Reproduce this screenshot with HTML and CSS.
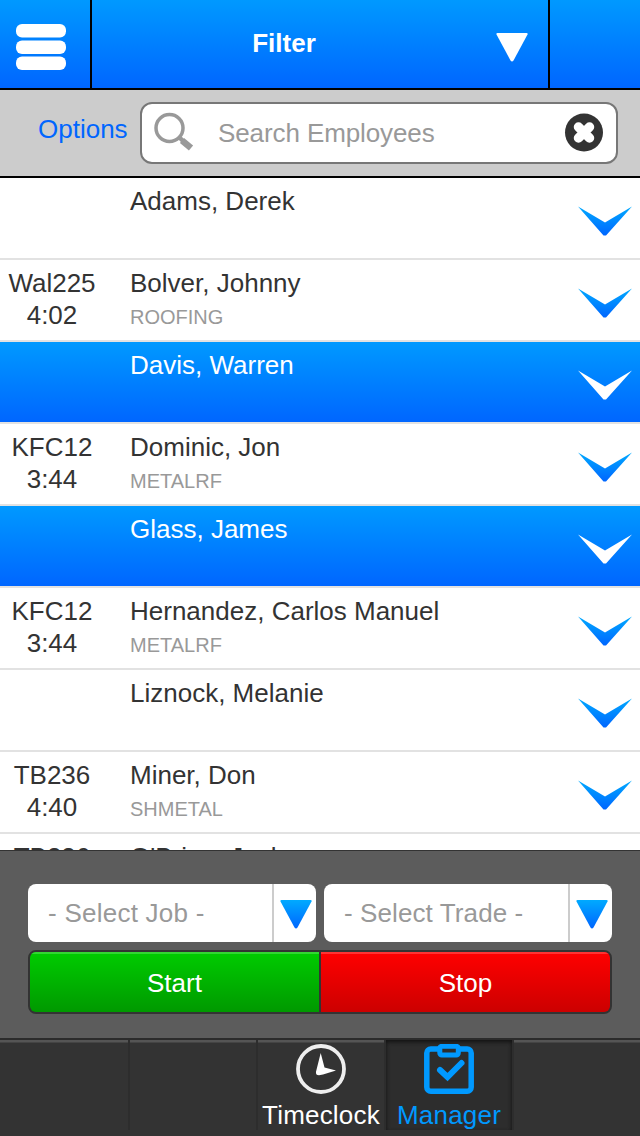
FILE: index.html
```
<!DOCTYPE html>
<html lang="en">
<head>
<meta charset="utf-8">
<title>Manager</title>
<link rel="stylesheet" href="styles.css">
</head>
<body>
<svg class="defs" width="0" height="0">
  <defs>
    <linearGradient id="blue" x1="0" y1="0" x2="0" y2="1"><stop offset="0" stop-color="#0af"/><stop offset="1" stop-color="#06f"/></linearGradient>
    <symbol id="chevron" viewBox="0 0 54 30"><path d="M0 .5 27 16.500 54 .5 28 29.500h-2.500z"/></symbol>
    <symbol id="triangle" viewBox="0 0 32 30"><path d="M1.500 1h29q1.500 0 1 1.500L17.500 28.500q-1.500 2-3 0L.5 2.500Q0 1 1.500 1z"/></symbol>
  </defs>
</svg>
<div class="app">
  <header class="topbar">
    <div class="menu">
      <svg width="50" height="48" viewBox="0 0 50 48" fill="#fff"><rect y="1" width="50" height="13.500" rx="6"/><rect y="17.500" width="50" height="13.500" rx="6"/><rect y="33.500" width="50" height="13.500" rx="6"/></svg>
    </div>
    <div class="filter">
      <span class="filter-title">Filter</span>
      <svg class="filter-arrow" width="32" height="30" fill="#fff"><use href="#triangle"/></svg>
    </div>
    <div class="extra"></div>
  </header>
  <div class="search-row">
    <span class="options">Options</span>
    <div class="search">
      <svg width="40" height="40" viewBox="0 0 40 40" fill="none" stroke="#999"><circle cx="15.500" cy="16" r="13.500" stroke-width="3.500"/><path d="M25 25l4 4" stroke-width="4.500"/><path d="M28 28.500 37 36" stroke-width="6.500"/></svg>
      <span class="placeholder">Search Employees</span>
      <svg class="clear" width="40" height="40" viewBox="0 0 40 40"><circle cx="20" cy="20.500" r="19" fill="#333"/><path d="M14.500 15l11 11m0-11l-11 11" stroke="#fff" stroke-width="9.500" stroke-linecap="round"/></svg>
    </div>
  </div>
  <main class="list">
    <div class="row"><div class="job"></div><div class="who"><div>Adams, Derek</div></div><svg class="chev"><use href="#chevron"/></svg></div>
    <div class="row"><div class="job">Wal225<br>4:02</div><div class="who"><div>Bolver, Johnny</div><div class="trade">ROOFING</div></div><svg class="chev"><use href="#chevron"/></svg></div>
    <div class="row selected"><div class="job"></div><div class="who"><div>Davis, Warren</div></div><svg class="chev"><use href="#chevron"/></svg></div>
    <div class="row"><div class="job">KFC12<br>3:44</div><div class="who"><div>Dominic, Jon</div><div class="trade">METALRF</div></div><svg class="chev"><use href="#chevron"/></svg></div>
    <div class="row selected"><div class="job"></div><div class="who"><div>Glass, James</div></div><svg class="chev"><use href="#chevron"/></svg></div>
    <div class="row"><div class="job">KFC12<br>3:44</div><div class="who"><div>Hernandez, Carlos Manuel</div><div class="trade">METALRF</div></div><svg class="chev"><use href="#chevron"/></svg></div>
    <div class="row"><div class="job"></div><div class="who"><div>Liznock, Melanie</div></div><svg class="chev"><use href="#chevron"/></svg></div>
    <div class="row"><div class="job">TB236<br>4:40</div><div class="who"><div>Miner, Don</div><div class="trade">SHMETAL</div></div><svg class="chev"><use href="#chevron"/></svg></div>
    <div class="row"><div class="job">TB236</div><div class="who"><div>O'Brien, Jack</div></div><svg class="chev"><use href="#chevron"/></svg></div>
  </main>
  <section class="controls">
    <div class="selects">
      <div class="select"><span class="select-label">- Select Job -</span><span class="select-arrow"><svg width="32" height="30" fill="url(#blue)"><use href="#triangle"/></svg></span></div>
      <div class="select"><span class="select-label">- Select Trade -</span><span class="select-arrow"><svg width="32" height="30" fill="url(#blue)"><use href="#triangle"/></svg></span></div>
    </div>
    <div class="buttons"><div class="button start">Start</div><div class="button stop">Stop</div></div>
  </section>
  <nav class="tabs">
    <div class="tab first"></div>
    <div class="tab"></div>
    <div class="tab">
      <svg width="50" height="50" viewBox="0 0 50 50"><circle cx="25" cy="25" r="23" fill="none" stroke="#eee" stroke-width="3.800"/><path d="M24.700 9 28.500 23.500 40 26.500 27 30.500 23 31.300q-3.500 0-3-3.500z" fill="#fff"/></svg>
      <span class="tab-label">Timeclock</span>
    </div>
    <div class="tab active">
      <svg width="50" height="50" viewBox="0 0 50 50" fill="none" stroke="#09f"><rect x="2.800" y="5" width="44.400" height="42.200" rx="4" stroke-width="5.500"/><rect x="15.800" y="2.300" width="18.500" height="8.700" rx="2" fill="#2d2d2d" stroke-width="5"/><path d="M16 26 23.500 33 37.500 19" stroke-width="6" stroke-linecap="round"/></svg>
      <span class="tab-label">Manager</span>
    </div>
    <div class="tab last"></div>
  </nav>
</div>
</body>
</html>
```
FILE: styles.css
```
* { box-sizing: border-box; }
body { margin: 0; font-family: "Liberation Sans", Arial, sans-serif; font-size: 26px; color: #333; }
svg { display: block; flex: none; }
.defs { position: absolute; }
.app { width: 640px; height: 1136px; display: flex; flex-direction: column; overflow: hidden; background: #fff; }
.topbar { flex: none; height: 90px; display: flex; border-bottom: 2px solid #000; background: linear-gradient(#09f, #06f); }
.menu { width: 92px; padding: 23px 0 0 16px; border-right: 2px solid #000; }
.filter { width: 458px; display: flex; align-items: flex-start; border-right: 2px solid #000; color: #fff; font-weight: bold; }
.filter-title { width: 404px; padding: 28px 20px 0 0; line-height: 30px; text-align: center; }
.filter-arrow { margin-top: 32px; }
.search-row { flex: none; height: 88px; display: flex; padding: 12px 22px 0 38px; border-bottom: 2px solid #000; background: #ccc; }
.options { width: 102px; padding-top: 12px; line-height: 30px; color: #06f; white-space: nowrap; }
.search { width: 478px; height: 62px; display: flex; align-items: center; padding: 0 12px; border: 2px solid #777; border-radius: 12px; background: #fff; color: #999; }
.search svg { position: relative; top: -1px; }
.placeholder { flex: 1; padding-left: 24px; line-height: 30px; letter-spacing: -0.1px; }
.list { height: 672px; flex: none; overflow: hidden; }
.row { height: 82px; display: flex; border-bottom: 2px solid #e2e2e2; line-height: 32px; }
.row.selected { background: linear-gradient(#09f, #06f); color: #fff; }
.job { width: 104px; padding-top: 7px; text-align: center; }
.who { flex: 1; padding: 7px 0 0 26px; }
.trade { padding-top: 2px; font-size: 20px; color: #999; }
.chev { width: 54px; height: 30px; margin: 28px 8px 0 0; fill: url(#blue); }
.selected .chev { fill: #fff; }
.controls { flex: none; height: 188px; padding: 33px 28px 0; border-top: 1px solid #333; background: #5c5c5c; }
.selects { display: flex; gap: 8px; }
.select { width: 288px; height: 58px; display: flex; border-radius: 8px; background: #fff; color: #999; }
.select-label { width: 244px; padding: 14px 0 0 20px; line-height: 30px; letter-spacing: 0.25px; }
.select + .select .select-label { letter-spacing: 0.1px; }
.select-arrow { width: 44px; padding: 15px 0 0 6px; border-left: 2px solid #ccc; }
.buttons { height: 64px; display: flex; margin-top: 8px; border: 2px solid #333; border-radius: 8px; overflow: hidden; background: #333; }
.button { flex: 1; line-height: 62px; text-align: center; color: #fff; }
.start { border-right: 2px solid #333; background: linear-gradient(#0c0, #090); box-shadow: inset 0 2px #33d633; }
.stop { background: linear-gradient(#f00, #c00); box-shadow: inset 0 2px #f33; }
.tabs { flex: 1; display: flex; padding-bottom: 8px; border-top: 2px solid #2b2b2b; background: #333; }
.tab { width: 128px; flex: none; padding-top: 4px; display: flex; flex-direction: column; align-items: center; border-right: 2px solid #2d2d2d; box-shadow: inset 0 2px #555, inset 0 3px #444; color: #fff; }
.tab.first { width: 130px; }
.tab.last { width: 126px; border-right: 0; }
.tab-label { line-height: 30px; padding-top: 6px; letter-spacing: 0.2px; }
.tab.active { background: #2d2d2d; box-shadow: inset 0 2px 4px #111; color: #09f; }
```
